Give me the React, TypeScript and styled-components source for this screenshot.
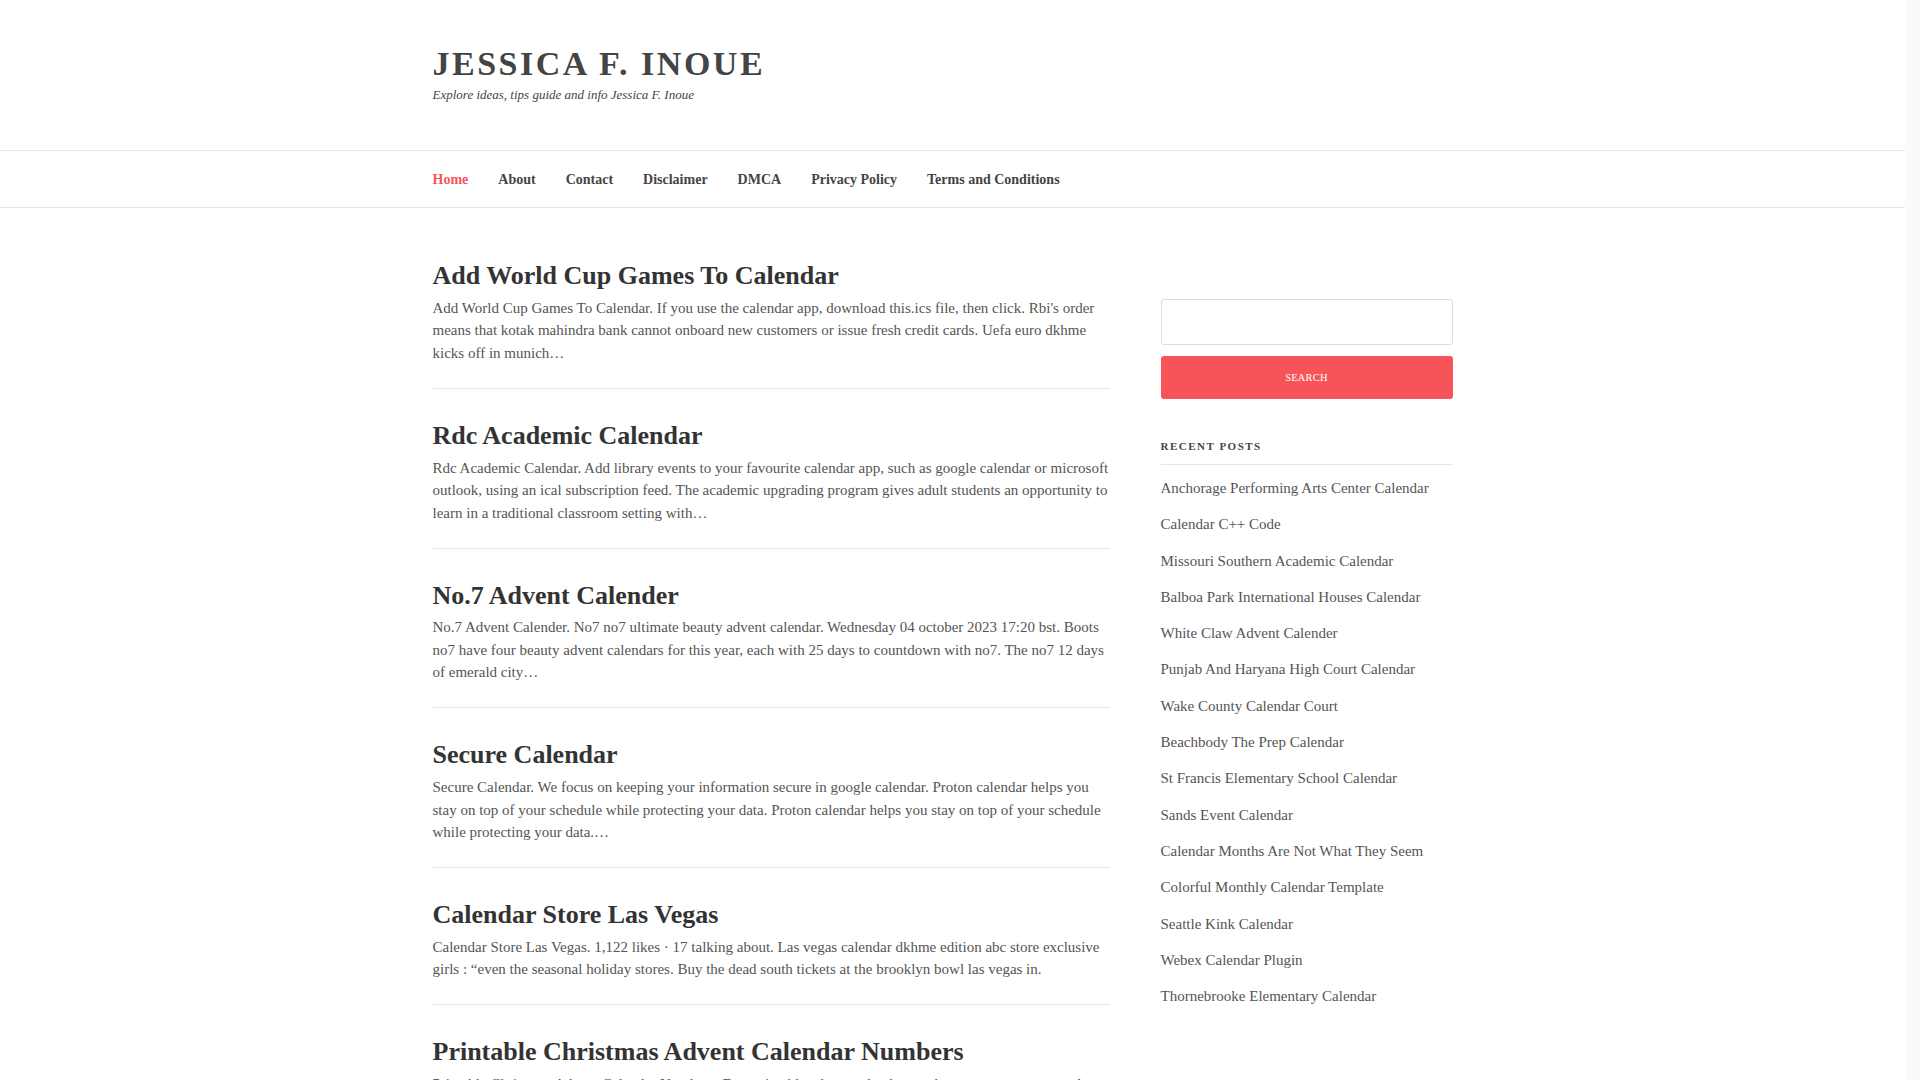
import React from 'react'
import styled, { createGlobalStyle } from 'styled-components'

const GlobalStyle = createGlobalStyle`
  html {
    background: #fafafa;
  }
  html, body {
    margin: 0;
    padding: 0;
  }
  body {
    font-family: "Liberation Serif", "Times New Roman", serif;
    color: #555;
  }
  * { box-sizing: border-box; }
`

const posts = [
  {
    title: 'Add World Cup Games To Calendar',
    excerpt:
      "Add World Cup Games To Calendar. If you use the calendar app, download this.ics file, then click. Rbi's order means that kotak mahindra bank cannot onboard new customers or issue fresh credit cards. Uefa euro dkhme kicks off in munich…",
  },
  {
    title: 'Rdc Academic Calendar',
    excerpt:
      'Rdc Academic Calendar. Add library events to your favourite calendar app, such as google calendar or microsoft outlook, using an ical subscription feed. The academic upgrading program gives adult students an opportunity to learn in a traditional classroom setting with…',
  },
  {
    title: 'No.7 Advent Calender',
    excerpt:
      'No.7 Advent Calender. No7 no7 ultimate beauty advent calendar. Wednesday 04 october 2023 17:20 bst. Boots no7 have four beauty advent calendars for this year, each with 25 days to countdown with no7. The no7 12 days of emerald city…',
  },
  {
    title: 'Secure Calendar',
    excerpt:
      'Secure Calendar. We focus on keeping your information secure in google calendar. Proton calendar helps you stay on top of your schedule while protecting your data. Proton calendar helps you stay on top of your schedule while protecting your data.…',
  },
  {
    title: 'Calendar Store Las Vegas',
    excerpt:
      'Calendar Store Las Vegas. 1,122 likes · 17 talking about. Las vegas calendar dkhme edition abc store exclusive girls : “even the seasonal holiday stores. Buy the dead south tickets at the brooklyn bowl las vegas in.',
  },
  {
    title: 'Printable Christmas Advent Calendar Numbers',
    excerpt:
      'Printable Christmas Advent Calendar Numbers. Free printable advent calendar numbers you can cut out and stick on bags, boxes or envelopes to count down the days to christmas with the kids…',
  },
]

const recent = [
  'Anchorage Performing Arts Center Calendar',
  'Calendar C++ Code',
  'Missouri Southern Academic Calendar',
  'Balboa Park International Houses Calendar',
  'White Claw Advent Calender',
  'Punjab And Haryana High Court Calendar',
  'Wake County Calendar Court',
  'Beachbody The Prep Calendar',
  'St Francis Elementary School Calendar',
  'Sands Event Calendar',
  'Calendar Months Are Not What They Seem',
  'Colorful Monthly Calendar Template',
  'Seattle Kink Calendar',
  'Webex Calendar Plugin',
  'Thornebrooke Elementary Calendar',
]

const navLinks = ['Home', 'About', 'Contact', 'Disclaimer', 'DMCA', 'Privacy Policy', 'Terms and Conditions']

export default function App() {
  return (
    <Page>
      <GlobalStyle />
      <Header>
        <Wrap>
          <SiteTitle>JESSICA F. INOUE</SiteTitle>
          <Tagline>Explore ideas, tips guide and info Jessica F. Inoue</Tagline>
        </Wrap>
      </Header>
      <NavBar>
        <Wrap>
          <NavList>
            {navLinks.map((l, i) => (
              <NavItem key={l} $active={i === 0}>{l}</NavItem>
            ))}
          </NavList>
        </Wrap>
      </NavBar>
      <Wrap>
        <Content>
          <Main>
            {posts.map((p) => (
              <Post key={p.title}>
                <PostTitle>{p.title}</PostTitle>
                <Excerpt>{p.excerpt}</Excerpt>
              </Post>
            ))}
          </Main>
          <Sidebar>
            <SearchInput type="text" />
            <SearchButton>Search</SearchButton>
            <WidgetTitle>Recent Posts</WidgetTitle>
            <RecentList>
              {recent.map((r) => (
                <RecentItem key={r}>{r}</RecentItem>
              ))}
            </RecentList>
          </Sidebar>
        </Content>
      </Wrap>
    </Page>
  )
}

/* leaves a 15px strip on the right where the reference shows its scrollbar */
const Page = styled.div`
  min-height: 1300px;
  margin-right: 15px;
  background: #fff;
`

const Wrap = styled.div`
  width: 1040px;
  margin: 0 auto;
`

const Header = styled.header`
  padding: 44px 0 46px;
  border-bottom: 1px solid #e6e6e6;
`

const SiteTitle = styled.h1`
  margin: 0;
  font-size: 34px;
  line-height: 40px;
  font-weight: bold;
  letter-spacing: 2.5px;
  color: #444;
`

const Tagline = styled.p`
  margin: 2px 0 0;
  font-size: 13px;
  line-height: 18px;
  font-style: italic;
  color: #444;
`

const NavBar = styled.nav`
  border-bottom: 1px solid #e6e6e6;
`

const NavList = styled.ul`
  display: flex;
  gap: 30px;
  list-style: none;
  margin: 0;
  padding: 19px 0 17px;
`

const NavItem = styled.li<{ $active?: boolean }>`
  font-size: 14px;
  line-height: 20px;
  font-weight: bold;
  color: ${(p) => (p.$active ? '#f75459' : '#444')};
`

const Content = styled.div`
  display: grid;
  grid-template-columns: 677px 292px;
  column-gap: 51px;
  padding-top: 51px;
`

const Main = styled.main`
  display: flex;
  flex-direction: column;
  gap: 30px;
`

const Post = styled.article`
  padding-bottom: 23.5px;
  border-bottom: 1px solid #e6e6e6;
`

const PostTitle = styled.h2`
  margin: 0 0 4px;
  font-size: 26px;
  line-height: 33.8px;
  font-weight: bold;
  color: #333;
`

const Excerpt = styled.p`
  margin: 0;
  font-size: 15px;
  line-height: 22.5px;
  color: #555;
`

const Sidebar = styled.aside`
  padding-top: 40px;
  display: flex;
  flex-direction: column;
`

const SearchInput = styled.input`
  width: 100%;
  height: 46px;
  border: 1px solid #ddd;
  border-radius: 3px;
  background: #fff;
  outline: none;
`

const SearchButton = styled.button`
  margin-top: 11px;
  width: 100%;
  height: 43px;
  border: none;
  border-radius: 3px;
  background: #f75459;
  color: #fff;
  font-family: "Liberation Serif", "Times New Roman", serif;
  font-size: 10.5px;
  text-transform: uppercase;
  letter-spacing: 0.2px;
`

const WidgetTitle = styled.h3`
  margin: 39px 0 0;
  padding-bottom: 10px;
  border-bottom: 1px solid #e6e6e6;
  font-size: 11px;
  line-height: 16px;
  font-weight: bold;
  letter-spacing: 1.5px;
  text-transform: uppercase;
  color: #444;
`

const RecentList = styled.ul`
  list-style: none;
  margin: 0;
  padding: 5px 0 0;
`

const RecentItem = styled.li`
  padding: 7px 0;
  font-size: 15px;
  line-height: 22.3px;
  color: #555;
`
